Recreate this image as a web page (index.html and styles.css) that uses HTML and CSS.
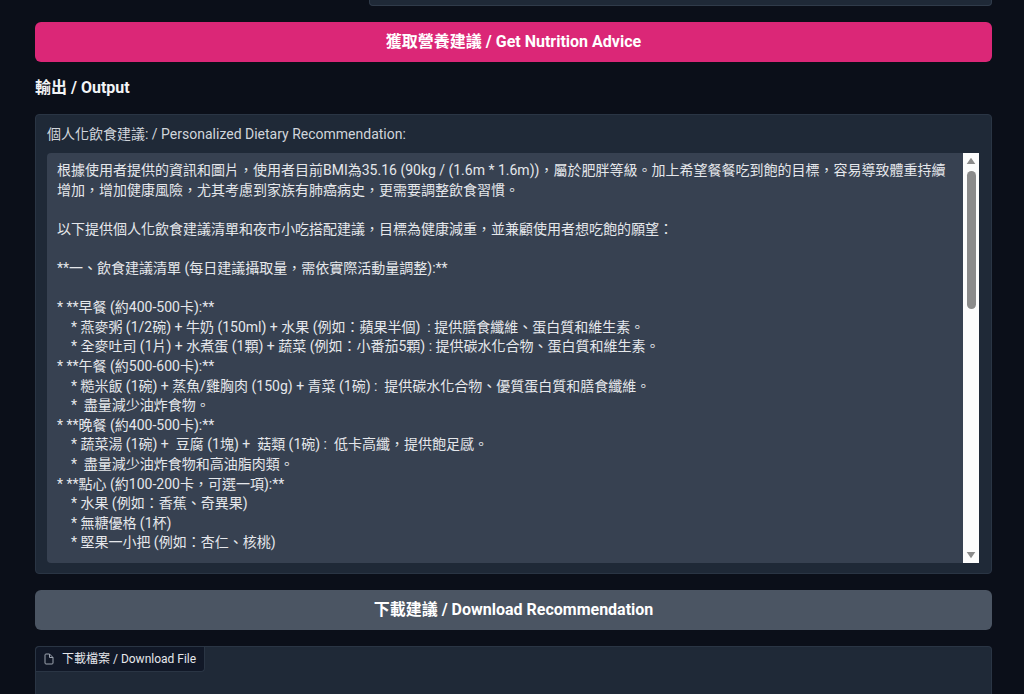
FILE: index.html
```html
<!DOCTYPE html>
<html lang="zh-Hant">
<head>
<meta charset="utf-8">
<meta name="viewport" content="width=device-width, initial-scale=1">
<title>營養建議 / Nutrition Advice</title>
<link rel="stylesheet" href="styles.css">
</head>
<body>
<main class="app">
  <div class="upper-row">
    <div class="upper-panel"></div>
  </div>
  <button class="btn btn-primary" type="button">獲取營養建議 / Get Nutrition Advice</button>
  <h3 class="heading">輸出 / Output</h3>
  <section class="panel">
    <label class="panel-label" for="advice">個人化飲食建議: / Personalized Dietary Recommendation:</label>
    <div class="field">
      <textarea class="field-text" id="advice" rows="20" readonly>根據使用者提供的資訊和圖片，使用者目前BMI為35.16 (90kg / (1.6m * 1.6m))，屬於肥胖等級。加上希望餐餐吃到飽的目標，容易導致體重持續增加，增加健康風險，尤其考慮到家族有肺癌病史，更需要調整飲食習慣。

以下提供個人化飲食建議清單和夜市小吃搭配建議，目標為健康減重，並兼顧使用者想吃飽的願望：

**一、飲食建議清單 (每日建議攝取量，需依實際活動量調整):**

* **早餐 (約400-500卡):**
    * 燕麥粥 (1/2碗) + 牛奶 (150ml) + 水果 (例如：蘋果半個)  : 提供膳食纖維、蛋白質和維生素。
    * 全麥吐司 (1片) + 水煮蛋 (1顆) + 蔬菜 (例如：小番茄5顆) : 提供碳水化合物、蛋白質和維生素。
* **午餐 (約500-600卡):**
    * 糙米飯 (1碗) + 蒸魚/雞胸肉 (150g) + 青菜 (1碗) :  提供碳水化合物、優質蛋白質和膳食纖維。
    *  盡量減少油炸食物。
* **晚餐 (約400-500卡):**
    * 蔬菜湯 (1碗) +  豆腐 (1塊) +  菇類 (1碗) :  低卡高纖，提供飽足感。
    *  盡量減少油炸食物和高油脂肉類。
* **點心 (約100-200卡，可選一項):**
    * 水果 (例如：香蕉、奇異果)
    * 無糖優格 (1杯)
    * 堅果一小把 (例如：杏仁、核桃)</textarea>
      <div class="scrollbar" aria-hidden="true">
        <svg class="scroll-arrow" viewBox="0 0 10 8"><path d="M5 .8 L9.3 7 H.7 Z"/></svg>
        <div class="scroll-track"><div class="scroll-thumb"></div></div>
        <svg class="scroll-arrow" viewBox="0 0 10 8"><path d="M5 7.2 L.7 1 H9.3 Z"/></svg>
      </div>
    </div>
  </section>
  <button class="btn btn-secondary" type="button">下載建議 / Download Recommendation</button>
  <section class="file-panel">
    <div class="file-label">
      <svg class="file-icon" viewBox="0 0 24 24"><path d="M13 2H6a2 2 0 0 0-2 2v16a2 2 0 0 0 2 2h12a2 2 0 0 0 2-2V9z"/><path d="M13 2v7h7"/></svg>
      <span>下載檔案 / Download File</span>
    </div>
  </section>
</main>
</body>
</html>
```

FILE: styles.css
```css
* {
  box-sizing: border-box;
}

body {
  margin: 0;
  height: 100vh;
  overflow: hidden;
  background: #0b0f19;
  color: #f3f4f6;
  font-family: Roboto, "Noto Sans CJK TC", sans-serif;
}

.app {
  display: flex;
  flex-direction: column;
  gap: 16px;
  height: 100%;
  padding: 0 32px 0 35px;
}

.upper-row {
  display: grid;
  grid-template-columns: 318px 1fr;
  gap: 16px;
}

.upper-panel {
  grid-column: 2;
  height: 6px;
  border: 1px solid #303b4a;
  border-top: 0;
  border-radius: 0 0 4px 4px;
  background: #1f2937;
}

.btn {
  flex: none;
  height: 40px;
  padding: 0 16px;
  border: 0;
  border-radius: 6px;
  color: #ffffff;
  font-family: inherit;
  font-size: 16px;
  font-weight: 700;
  line-height: 24px;
}

.btn-primary {
  background: #db2777;
}

.btn-secondary {
  background: #4b5563;
}

.heading {
  margin: 0;
  font-size: 16px;
  font-weight: 700;
  line-height: 20px;
}

.panel {
  flex: none;
  padding: 10px 12px 10px 11px;
  border: 1px solid #2a3544;
  border-radius: 4px;
  background: #1f2937;
}

.panel-label {
  display: block;
  margin-bottom: 10px;
  color: #d1d5db;
  font-size: 14px;
  line-height: 18px;
}

.field {
  display: flex;
  overflow: hidden;
  border-radius: 4px 0 0 4px;
  background: #374151;
}

.field-text {
  display: block;
  flex: 1;
  min-width: 0;
  padding: 8px 10px 10px;
  border: 0;
  outline: 0;
  resize: none;
  overflow: hidden;
  background: transparent;
  color: #e5e7eb;
  font-family: inherit;
  font-size: 14px;
  line-height: 1.4;
}

.scrollbar {
  display: flex;
  flex-direction: column;
  align-items: center;
  width: 16px;
  padding: 4px 0;
  background: #fcfcfc;
}

.scroll-arrow {
  flex: none;
  width: 10px;
  height: 8px;
  fill: #8b8b8b;
}

.scroll-track {
  flex: 1;
  width: 9px;
  padding: 6px 0;
}

.scroll-thumb {
  height: 37%;
  border-radius: 5px;
  background: #8b8b8b;
}

.file-panel {
  flex: 1;
  border: 1px solid #2a3544;
  border-bottom: 0;
  border-radius: 4px 4px 0 0;
  background: #1f2937;
}

.file-label {
  display: inline-flex;
  align-items: center;
  gap: 7px;
  padding: 3px 8px 3px 7px;
  border: 1px solid #2a3544;
  border-width: 0 1px 1px 0;
  border-radius: 4px 0 4px 0;
  background: #111827;
  color: #e5e7eb;
  font-size: 12px;
  line-height: 18px;
}

.file-icon {
  width: 12px;
  height: 12px;
  fill: none;
  stroke: #9ca3af;
  stroke-width: 2;
  stroke-linejoin: round;
}
```
